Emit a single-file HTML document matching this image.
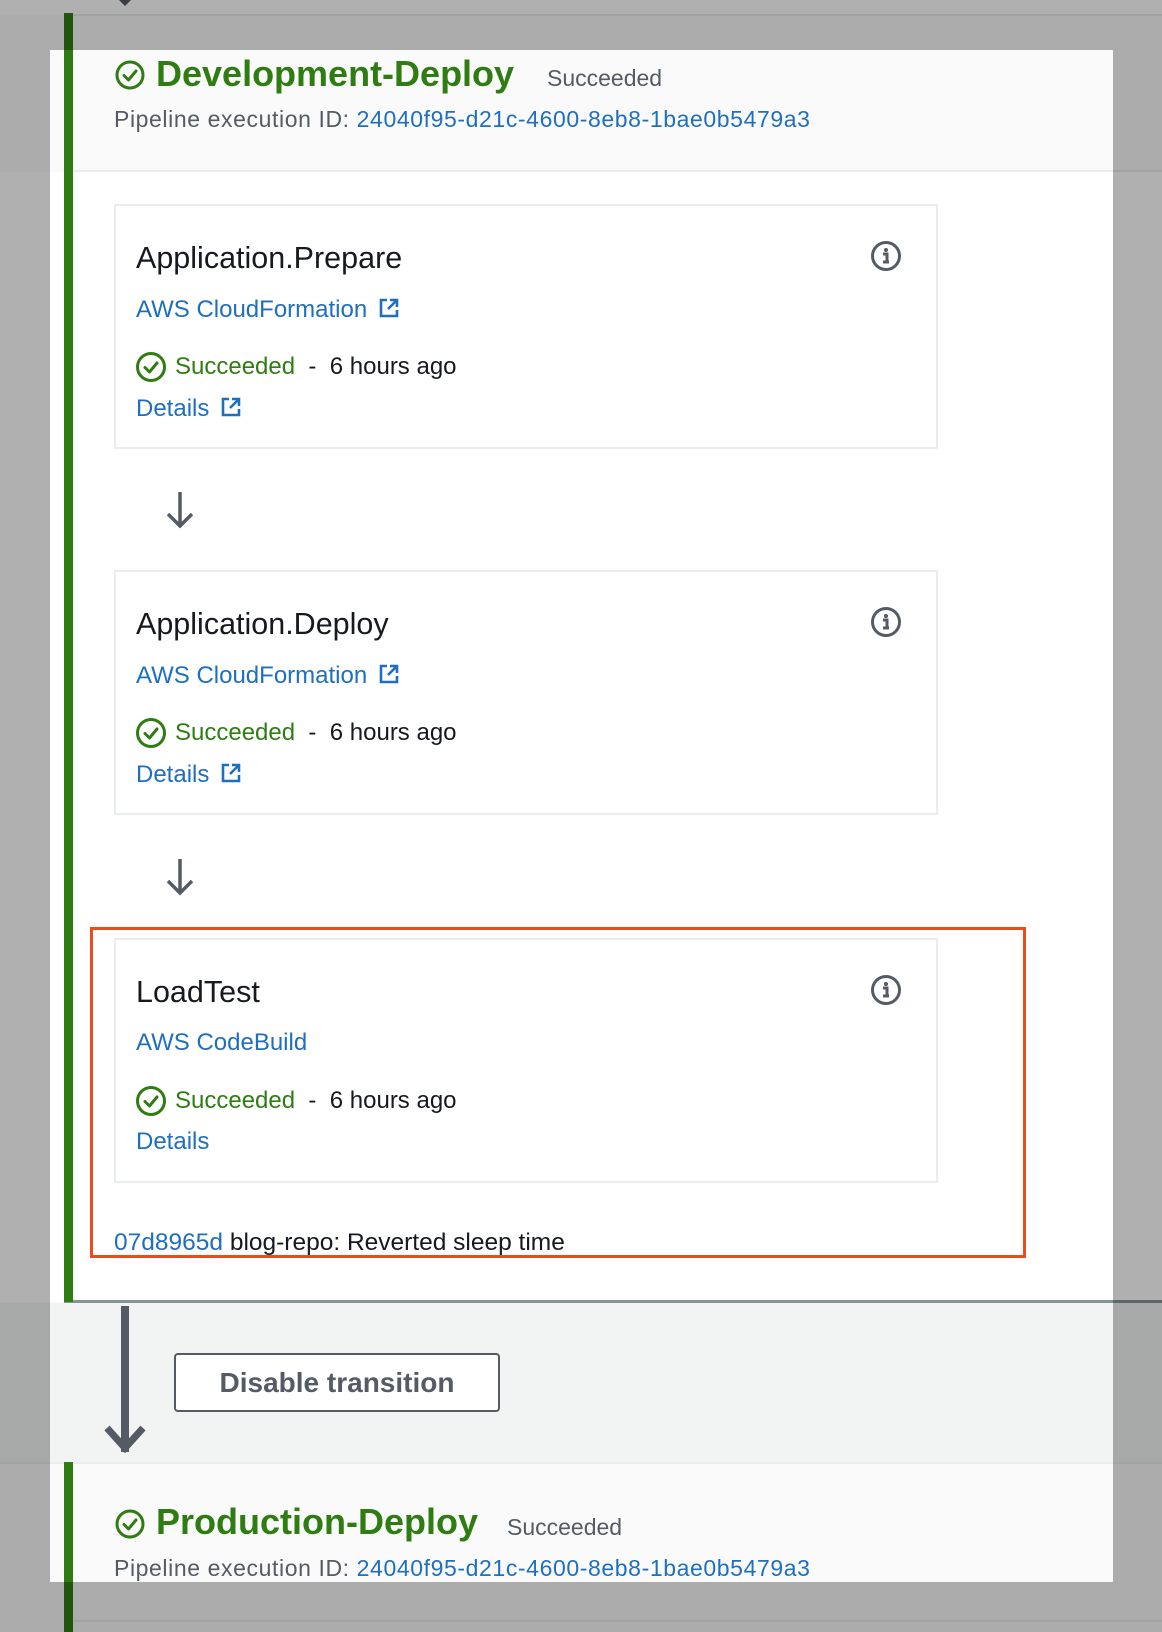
<!DOCTYPE html>
<html><head><meta charset="utf-8"><style>
*{margin:0;padding:0;box-sizing:border-box}
body{width:1162px;height:1632px;position:relative;overflow:hidden;background:#fafafa;font-family:"Liberation Sans",sans-serif;}
.a{position:absolute;white-space:nowrap}
.link{color:#1f6fbf}
.green{color:#2f7d12}
.gray{color:#545b64}
.card{position:absolute;left:114px;width:824px;height:245px;border:2px solid #eaeded;background:#fff}
.t{position:absolute;left:20px;font-size:30.5px;color:#16191f;line-height:1}
.info{position:absolute;left:754px;top:34px}
.sub{position:absolute;left:20px;font-size:24px;line-height:1}
.st{position:absolute;left:19px;font-size:24px;line-height:1;display:flex;align-items:center}
.pid{font-size:23px;letter-spacing:0.6px;line-height:26px}
</style></head><body>
<div class="a" style="left:0;top:0;width:1162px;height:14px;background:#fff"></div>
<div class="a" style="left:73px;top:14px;width:1089px;height:2px;background:#eaeded"></div>
<svg class="a" style="left:117px;top:0" width="16" height="8"><path d="M2 0 L8 6 L14 0Z" fill="#545b64"/></svg>
<div class="a" style="left:0;top:16px;width:1162px;height:155px;background:#fafafa"></div>
<div class="a" style="left:73px;top:170px;width:1089px;height:2px;background:#eaeded"></div>
<div class="a" style="left:0;top:172px;width:1162px;height:1130px;background:#fff"></div>
<div class="a" style="left:64px;top:1300px;width:1098px;height:3px;background:#879596"></div>
<div class="a" style="left:0;top:1303px;width:1162px;height:160px;background:#f2f3f3"></div>
<div class="a" style="left:0;top:1462px;width:1162px;height:2px;background:#eaeded"></div>
<div class="a" style="left:0;top:1464px;width:1162px;height:168px;background:#fafafa"></div>
<div class="a" style="left:73px;top:1620px;width:1089px;height:2px;background:#eaeded"></div>
<div class="a" style="left:64px;top:13px;width:9px;height:1289px;background:#2f7d12"></div>
<div class="a" style="left:64px;top:1462px;width:9px;height:170px;background:#2f7d12"></div>

<svg class="a" style="left:114px;top:59px" width="32" height="32"><circle cx="16" cy="16" r="13" fill="none" stroke="#2f7d12" stroke-width="3"/><path d="M10 16.5 L14.5 21 L22 12" fill="none" stroke="#2f7d12" stroke-width="3" stroke-linejoin="round" stroke-linecap="round"/></svg>
<div class="a green" style="left:156px;top:54px;font-size:36px;font-weight:bold;line-height:40px">Development-Deploy</div>
<div class="a gray" style="left:547px;top:65px;font-size:23px;line-height:26px">Succeeded</div>
<div class="a gray pid" style="left:114px;top:106px">Pipeline execution ID: <span class="link">24040f95-d21c-4600-8eb8-1bae0b5479a3</span></div>

<div class="card" style="top:204px">
 <div class="t" style="top:37px">Application.Prepare</div>
 <svg class="info" width="34" height="34"><circle cx="16" cy="16" r="13.5" fill="none" stroke="#545b64" stroke-width="3"/><circle cx="16" cy="10" r="2" fill="#545b64"/><path d="M13 14h4v8M13 22h6" fill="none" stroke="#545b64" stroke-width="3"/></svg>
 <div class="sub link" style="top:91px">AWS CloudFormation <svg width="22" height="22" style="vertical-align:-2px;margin-left:4px"><path d="M9 3H3v16h16v-6" fill="none" stroke="#1f6fbf" stroke-width="2.6"/><path d="M12 3h7v7M19 3l-9 9" fill="none" stroke="#1f6fbf" stroke-width="2.6"/></svg></div>
 <div class="st" style="top:145px"><svg width="32" height="32" style="margin-right:8px"><circle cx="16" cy="16" r="13.5" fill="none" stroke="#2f7d12" stroke-width="3"/><path d="M10 16.5 L14.5 21 L22 12" fill="none" stroke="#2f7d12" stroke-width="3" stroke-linejoin="round" stroke-linecap="round"/></svg><span class="green">Succeeded</span><span style="color:#16191f">&nbsp;&nbsp;-&nbsp;&nbsp;6 hours ago</span></div>
 <div class="sub link" style="top:190px">Details <svg width="22" height="22" style="vertical-align:-2px;margin-left:4px"><path d="M9 3H3v16h16v-6" fill="none" stroke="#1f6fbf" stroke-width="2.6"/><path d="M12 3h7v7M19 3l-9 9" fill="none" stroke="#1f6fbf" stroke-width="2.6"/></svg></div>
</div>
<svg class="a" style="left:163px;top:490px" width="34" height="40"><path d="M17 2V36M5 24L17 36L29 24" fill="none" stroke="#545b64" stroke-width="3.5"/></svg>

<div class="card" style="top:570px">
 <div class="t" style="top:37px">Application.Deploy</div>
 <svg class="info" width="34" height="34"><circle cx="16" cy="16" r="13.5" fill="none" stroke="#545b64" stroke-width="3"/><circle cx="16" cy="10" r="2" fill="#545b64"/><path d="M13 14h4v8M13 22h6" fill="none" stroke="#545b64" stroke-width="3"/></svg>
 <div class="sub link" style="top:91px">AWS CloudFormation <svg width="22" height="22" style="vertical-align:-2px;margin-left:4px"><path d="M9 3H3v16h16v-6" fill="none" stroke="#1f6fbf" stroke-width="2.6"/><path d="M12 3h7v7M19 3l-9 9" fill="none" stroke="#1f6fbf" stroke-width="2.6"/></svg></div>
 <div class="st" style="top:145px"><svg width="32" height="32" style="margin-right:8px"><circle cx="16" cy="16" r="13.5" fill="none" stroke="#2f7d12" stroke-width="3"/><path d="M10 16.5 L14.5 21 L22 12" fill="none" stroke="#2f7d12" stroke-width="3" stroke-linejoin="round" stroke-linecap="round"/></svg><span class="green">Succeeded</span><span style="color:#16191f">&nbsp;&nbsp;-&nbsp;&nbsp;6 hours ago</span></div>
 <div class="sub link" style="top:190px">Details <svg width="22" height="22" style="vertical-align:-2px;margin-left:4px"><path d="M9 3H3v16h16v-6" fill="none" stroke="#1f6fbf" stroke-width="2.6"/><path d="M12 3h7v7M19 3l-9 9" fill="none" stroke="#1f6fbf" stroke-width="2.6"/></svg></div>
</div>
<svg class="a" style="left:163px;top:857px" width="34" height="40"><path d="M17 2V36M5 24L17 36L29 24" fill="none" stroke="#545b64" stroke-width="3.5"/></svg>

<div class="card" style="top:938px">
 <div class="t" style="top:37px">LoadTest</div>
 <svg class="info" width="34" height="34"><circle cx="16" cy="16" r="13.5" fill="none" stroke="#545b64" stroke-width="3"/><circle cx="16" cy="10" r="2" fill="#545b64"/><path d="M13 14h4v8M13 22h6" fill="none" stroke="#545b64" stroke-width="3"/></svg>
 <div class="sub link" style="top:91px">AWS CodeBuild</div>
 <div class="st" style="top:145px"><svg width="32" height="32" style="margin-right:8px"><circle cx="16" cy="16" r="13.5" fill="none" stroke="#2f7d12" stroke-width="3"/><path d="M10 16.5 L14.5 21 L22 12" fill="none" stroke="#2f7d12" stroke-width="3" stroke-linejoin="round" stroke-linecap="round"/></svg><span class="green">Succeeded</span><span style="color:#16191f">&nbsp;&nbsp;-&nbsp;&nbsp;6 hours ago</span></div>
 <div class="sub link" style="top:190px">Details</div>
</div>
<div class="a" style="left:114px;top:1231px;font-size:24.5px;line-height:1;color:#16191f"><span class="link">07d8965d</span>&nbsp;blog-repo: Reverted sleep time</div>
<div class="a" style="left:90px;top:927px;width:936px;height:331px;border:3px solid #ec4a1f"></div>

<svg class="a" style="left:100px;top:1306px" width="50" height="150"><path d="M25 0V146" stroke="#545b64" stroke-width="8"/><path d="M7 122L25 142L43 122" fill="none" stroke="#545b64" stroke-width="7"/></svg>
<div class="a" style="left:174px;top:1353px;width:326px;height:59px;border:2px solid #545b64;border-radius:4px;background:#fff;color:#545b64;font-weight:bold;font-size:28px;line-height:55px;text-align:center">Disable transition</div>

<svg class="a" style="left:114px;top:1508px" width="32" height="32"><circle cx="16" cy="16" r="13" fill="none" stroke="#2f7d12" stroke-width="3"/><path d="M10 16.5 L14.5 21 L22 12" fill="none" stroke="#2f7d12" stroke-width="3" stroke-linejoin="round" stroke-linecap="round"/></svg>
<div class="a green" style="left:156px;top:1502px;font-size:36px;font-weight:bold;line-height:40px">Production-Deploy</div>
<div class="a gray" style="left:507px;top:1514px;font-size:23px;line-height:26px">Succeeded</div>
<div class="a gray pid" style="left:114px;top:1555px">Pipeline execution ID: <span class="link">24040f95-d21c-4600-8eb8-1bae0b5479a3</span></div>

<div class="a" style="left:50px;top:50px;width:1063px;height:1532px;box-shadow:0 0 0 3000px rgba(0,0,0,0.31)"></div>
</body></html>
